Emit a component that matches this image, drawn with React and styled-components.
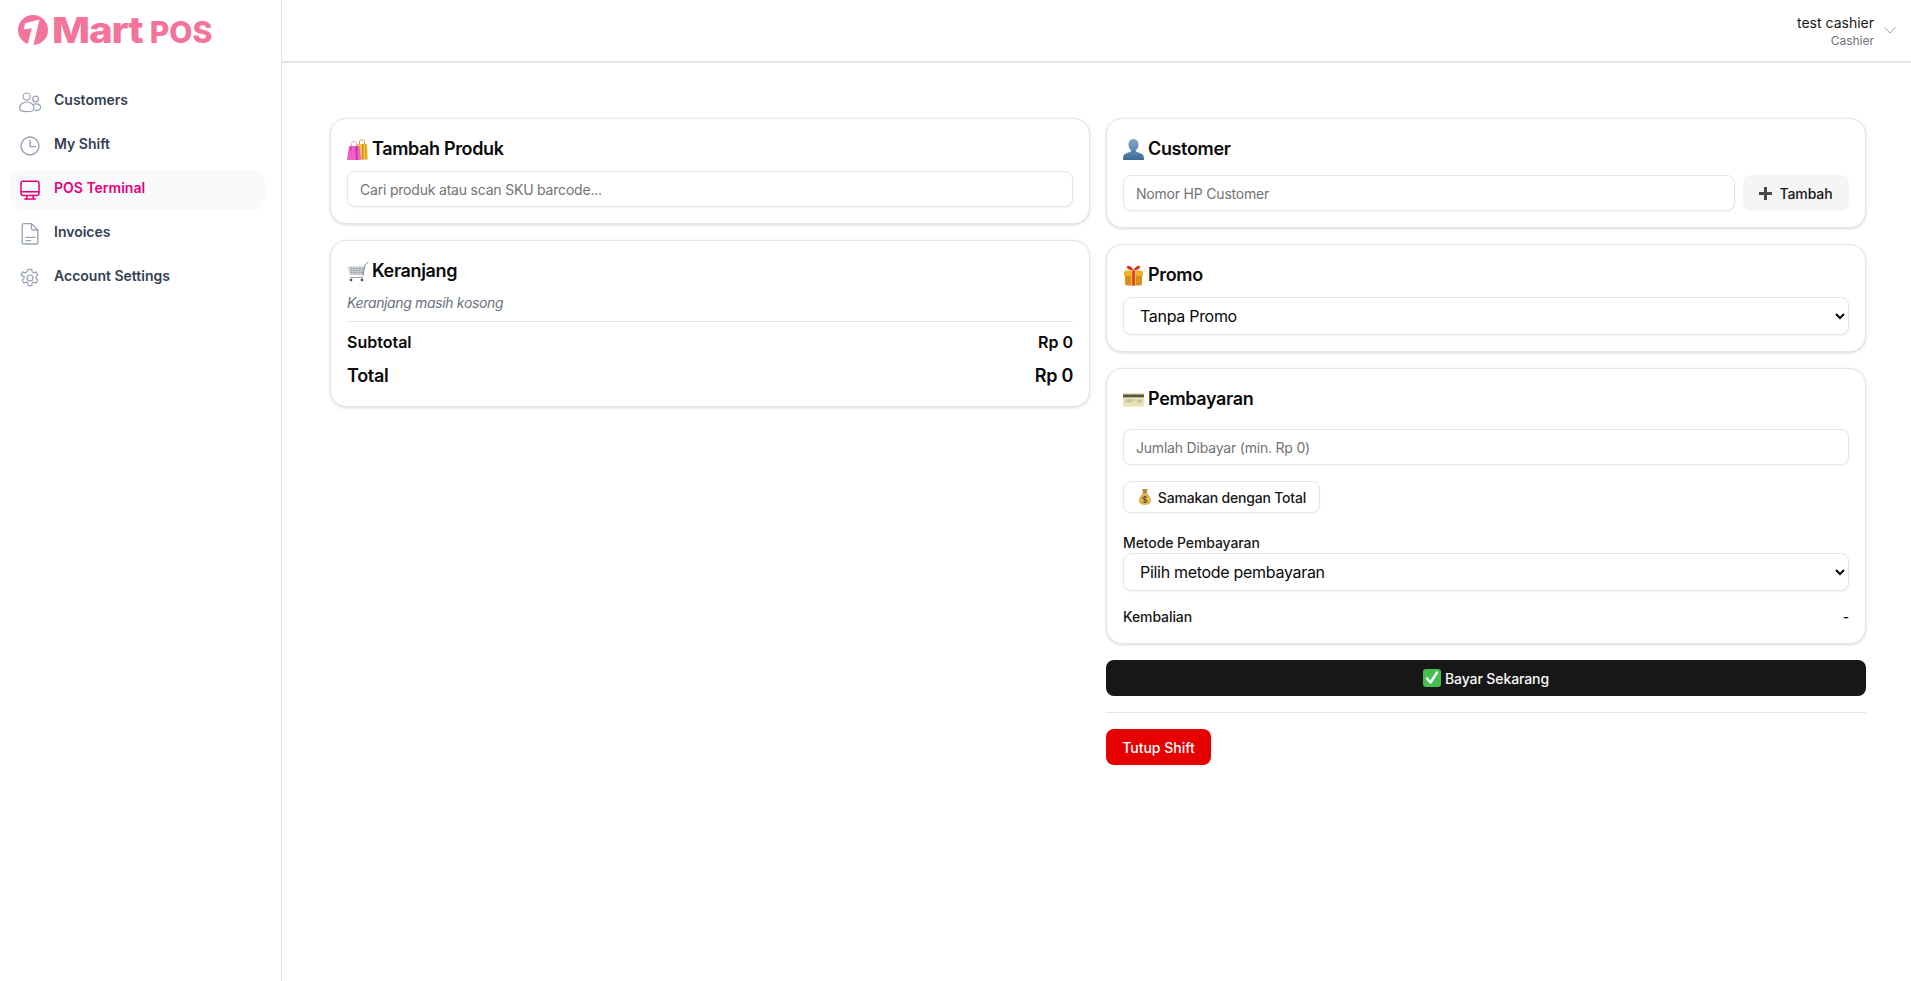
import React from 'react';
import styled, { createGlobalStyle } from 'styled-components';

const GlobalStyle = createGlobalStyle`
  html, body { margin: 0; padding: 0; background: #fff; }
  body { font-family: Inter, "Noto Sans", sans-serif; color: #0a0a0a; }
  * { box-sizing: border-box; }
`;

/* nav icons */
const UsersIcon = () => (
  <svg width="24" height="24" viewBox="0 0 24 24" fill="none" stroke="currentColor" strokeWidth="1.2">
    <circle cx="8.6" cy="6.6" r="3.6" />
    <circle cx="17.6" cy="9" r="2.9" />
    <path d="M1.6 18.4c0-3.9 3.2-6.4 7.2-6.4s7.2 2.5 7.2 6.4c0 2-3.2 3.2-7.2 3.2s-7.2-1.2-7.2-3.2z" />
    <path d="M15.2 14.4c.7-.4 1.6-.6 2.5-.6 2.6 0 4.9 1.4 4.9 3.8 0 2-2.2 3-5.8 3" />
  </svg>
);

const ClockIcon = () => (
  <svg width="24" height="24" viewBox="0 0 24 24" fill="none" stroke="currentColor" strokeWidth="1.4" strokeLinecap="round" strokeLinejoin="round">
    <circle cx="12" cy="12" r="9" />
    <path d="M12 6.4V12.6H17.6" />
  </svg>
);

const MonitorIcon = () => (
  <svg width="24" height="24" viewBox="0 0 24 24" fill="none" stroke="currentColor" strokeWidth="1.5" strokeLinecap="round" strokeLinejoin="round">
    <rect x="3" y="3.2" width="18" height="14.2" rx="2.2" />
    <path d="M3 13.8H21M9 17.4L8.6 20.8M15 17.4L15.4 20.8M6.8 20.9H17.2" />
  </svg>
);

const FileIcon = () => (
  <svg width="24" height="24" viewBox="0 0 24 24" fill="none" stroke="currentColor" strokeWidth="1.3" strokeLinecap="round" strokeLinejoin="round">
    <path d="M13.4 1.6H6a1.8 1.8 0 0 0-1.8 1.8v16.8A1.8 1.8 0 0 0 6 22h12a1.8 1.8 0 0 0 1.8-1.8V8z" />
    <path d="M13.4 1.6v4.6A1.8 1.8 0 0 0 15.2 8h4.6" />
    <path d="M8 15.3h9M8 18.7h4.7" />
  </svg>
);

const GearIcon = () => (
  <svg width="24" height="24" viewBox="0 0 24 24" fill="none" stroke="currentColor" strokeWidth="1.4" strokeLinecap="round" strokeLinejoin="round">
    <g transform="translate(1.44 1.44) scale(.88)">
      <circle cx="12" cy="12" r="3.4" />
      <path d="M10 2.2h4l.5 2.9 1.7 1 2.7-1 2 3.4-2.2 1.9v2l2.2 1.9-2 3.4-2.7-1-1.7 1-.5 2.9h-4l-.5-2.9-1.7-1-2.7 1-2-3.4 2.2-1.9v-2L1.8 8.5l2-3.4 2.7 1 1.7-1z" />
    </g>
  </svg>
);

/* colour emoji drawn by hand, the system ones look too different */
const BagsEmoji = () => (
  <svg width="21" height="21" viewBox="0 0 21 21" role="img" aria-label="🛍️">
    <path d="M12.5 5.5V3c0-3 5-3 5 0v3" fill="none" stroke="#d9a520" strokeWidth="1" />
    <path d="M10 5h10l1 15.5H10z" fill="#f3c53a" />
    <path d="M15 5h1.6v15.5H15zM18.2 5h1v15.5h-1z" fill="#c9952a" />
    <path d="M4.5 7.5V4.5c0-3 5-3 5 0v3" fill="none" stroke="#e9a0c8" strokeWidth="1" />
    <path d="M2 7h10.5l1.5 14H0z" fill="#f25ec6" />
    <path d="M8.4 7h1.4l.8 14H9z" fill="#b83a90" />
    <path d="M3.6 8.2h.8v3h-.8zM9.6 8.2h.8v3h-.8z" fill="#7d2a63" />
  </svg>
);

const CartEmoji = () => (
  <svg width="21" height="21" viewBox="0 0 21 21" role="img" aria-label="🛒">
    <path d="M0.4 5.5H17.4L15.8 14H3z" fill="#d3d6da" />
    <path d="M3 7.5H17M3 9.5H16.6M3 11.5H16.2M4 5.5L5 14M7 5.5L7.6 14M10 5.5V14M13 5.5L12.6 14M16 5.5L15 14" stroke="#8e959c" strokeWidth="0.5" fill="none" />
    <path d="M16 14.5L18 4L20.6 1.5" stroke="#868c93" strokeWidth="1" fill="none" strokeLinecap="round" />
    <path d="M3.5 16.4H16" stroke="#9aa0a6" strokeWidth="1" />
    <circle cx="4" cy="19" r="1.4" fill="#55595e" />
    <circle cx="15" cy="19" r="1.4" fill="#55595e" />
  </svg>
);

const UserEmoji = () => (
  <svg width="21" height="21" viewBox="0 0 21 21" role="img" aria-label="👤">
    <defs>
      <linearGradient id="userBlue" x1="0" y1="0" x2="0" y2="1">
        <stop offset="0" stopColor="#86a9c9" />
        <stop offset="1" stopColor="#3a6a98" />
      </linearGradient>
    </defs>
    <path
      d="M10.5 0c3.2 0 5 2.4 5 5.4 0 2.2-1 4.4-2.3 5.5-.5.4-.4 1.6.3 1.9 2.8 1.2 6.6 2 7.1 4.4.2 1 .4 2.1.4 3.8H0c0-1.7.2-2.8.4-3.8.5-2.4 4.3-3.2 7.1-4.4.7-.3.8-1.5.3-1.9C6.500 9.800 5.500 7.600 5.500 5.400 5.500 2.400 7.300 0 10.500 0z"
      fill="url(#userBlue)"
    />
  </svg>
);

const GiftEmoji = () => (
  <svg width="21" height="21" viewBox="0 0 21 21" role="img" aria-label="🎁">
    <path d="M10.500 5C8 1 5 0 4 1.500S6 5 10.500 5.500C15 5 18 3 17 1.500S13 1 10.500 5z" fill="#d8322f" />
    <path d="M1 7.500A2 2 0 0 1 3 5.500h15a2 2 0 0 1 2 2v3.500H1z" fill="#efb02c" />
    <path d="M2 11h17v7.500a2 2 0 0 1-2 2H4a2 2 0 0 1-2-2z" fill="#d98f1f" />
    <path d="M8 5.500h5V20.500H8z" fill="#f4c93e" />
    <path d="M9.200 5.500h2.600V20.500H9.200z" fill="#e3352f" />
  </svg>
);

const CardEmoji = () => (
  <svg width="21" height="21" viewBox="0 0 21 21" role="img" aria-label="💳">
    <rect x="0" y="4" width="21" height="13.500" rx="0.800" fill="#e9e3b4" />
    <rect x="0" y="5.500" width="21" height="2.800" fill="#57553f" />
    <path d="M2.500 11h9M2.500 12.800h6" stroke="#a9aa9a" strokeWidth="0.900" />
    <rect x="14" y="10.500" width="5" height="3" fill="#c9c297" />
  </svg>
);

const MoneyEmoji = () => (
  <svg width="17" height="18" viewBox="0 0 17 18" role="img" aria-label="💰">
    <path d="M5.500 0.500h6L10.300 4H6.700z" fill="#b98a3a" />
    <rect x="6" y="3.800" width="5" height="1.300" rx="0.500" fill="#7a5523" />
    <path d="M6.500 5C3.500 7.500 2 10.500 2 13c0 3 2.500 4.500 6.500 4.500S15 16 15 13c0-2.500-1.500-5.500-4.500-8z" fill="#e2b54f" />
    <path d="M8.500 7.800v7.400M10.600 9.400c-.5-.6-1.300-.8-2.100-.8-1.300 0-2.200.6-2.200 1.600 0 2.200 4.400 1.100 4.400 3.200 0 1-.9 1.600-2.200 1.600-1 0-1.800-.3-2.300-.9" fill="none" stroke="#3f3320" strokeWidth="0.900" />
  </svg>
);

const CheckEmoji = () => (
  <svg width="18" height="18" viewBox="0 0 18 18" role="img" aria-label="✅">
    <rect width="18" height="18" rx="3" fill="#43c04d" />
    <path d="M4 9.500L7.500 13.500L14 3.500" fill="none" stroke="#fff" strokeWidth="2.400" strokeLinecap="round" strokeLinejoin="round" />
  </svg>
);

const PlusIcon = () => (
  <svg width="13" height="13" viewBox="0 0 13 13" fill="#4a4a4a">
    <path d="M5 0h3v5h5v3H8v5H5V8H0V5h5z" />
  </svg>
);

const navItems = [
  { label: 'Customers', Icon: UsersIcon },
  { label: 'My Shift', Icon: ClockIcon },
  { label: 'POS Terminal', Icon: MonitorIcon, active: true },
  { label: 'Invoices', Icon: FileIcon },
  { label: 'Account Settings', Icon: GearIcon },
];

const App = () => {
  return (
    <Page>
      <GlobalStyle />
      <Sidebar>
        <Logo>
          <svg width="30" height="30" viewBox="0 0 30 30">
            <circle cx="15" cy="15" r="15" fill="#f4739a" />
            <path d="M7 8.200L21.500 4.500L15.500 30H9.500L13.800 13.200L5.600 14.500z" fill="#fff" />
          </svg>
          <LogoMart>Mart</LogoMart>
          <LogoPos>POS</LogoPos>
        </Logo>
        <Nav>
          {navItems.map(({ label, Icon, active }) => (
            <NavItem key={label} $active={active}>
              <Icon />
              <NavLabel>{label}</NavLabel>
            </NavItem>
          ))}
        </Nav>
      </Sidebar>

      <Main>
        <Header>
          <UserBox>
            <UserName>test cashier</UserName>
            <UserRole>Cashier</UserRole>
          </UserBox>
          <svg width="12" height="7" viewBox="0 0 12 7" fill="none" stroke="#9ca3af" strokeWidth="1">
            <path d="M0.5 0.5L6 6L11.5 0.5" />
          </svg>
        </Header>

        <Content>
          <Column>
            <Card>
              <CardTitle><BagsEmoji />Tambah Produk</CardTitle>
              <TextInput placeholder="Cari produk atau scan SKU barcode..." />
            </Card>
            <Card>
              <CardTitle><CartEmoji />Keranjang</CardTitle>
              <EmptyText>Keranjang masih kosong</EmptyText>
              <Divider />
              <SummaryRow>
                <span>Subtotal</span>
                <span>Rp 0</span>
              </SummaryRow>
              <SummaryRow $large>
                <span>Total</span>
                <span>Rp 0</span>
              </SummaryRow>
            </Card>
          </Column>

          <Column>
            <Card>
              <CardTitle><UserEmoji />Customer</CardTitle>
              <CustomerRow>
                <TextInput placeholder="Nomor HP Customer" />
                <AddButton><PlusIcon />Tambah</AddButton>
              </CustomerRow>
            </Card>
            <Card>
              <CardTitle><GiftEmoji />Promo</CardTitle>
              <Select defaultValue="none">
                <option value="none">Tanpa Promo</option>
              </Select>
            </Card>
            <Card>
              <PaymentTitle><CardEmoji />Pembayaran</PaymentTitle>
              <TextInput placeholder="Jumlah Dibayar (min. Rp 0)" />
              <OutlineButton><MoneyEmoji />Samakan dengan Total</OutlineButton>
              <FieldLabel>Metode Pembayaran</FieldLabel>
              <Select defaultValue="">
                <option value="">Pilih metode pembayaran</option>
              </Select>
              <ChangeRow>
                <span>Kembalian</span>
                <span>-</span>
              </ChangeRow>
            </Card>
            <PayButton><CheckEmoji />Bayar Sekarang</PayButton>
            <ThinLine />
            <div>
              <CloseShiftButton>Tutup Shift</CloseShiftButton>
            </div>
          </Column>
        </Content>
      </Main>
    </Page>
  );
};

export default App;

const Page = styled.div`
  display: flex;
  min-height: 981px;
`;

const Sidebar = styled.aside`
  width: 282px;
  flex-shrink: 0;
  border-right: 1px solid #e5e7eb;
  padding: 0 16px 0 10px;
`;

const Logo = styled.div`
  display: flex;
  align-items: center;
  height: 60px;
  padding-left: 8px;
  color: #f4739a;
  font-family: Inter, sans-serif;
`;

const LogoMart = styled.span`
  display: inline-block;
  margin-left: 4px;
  margin-right: 10px;
  font-size: 36px;
  font-weight: 800;
  letter-spacing: -1px;
  transform: scaleX(1.12);
  transform-origin: left center;
`;

const LogoPos = styled.span`
  margin-left: 7px;
  padding-top: 4px;
  font-size: 30px;
  font-weight: 800;
`;

const Nav = styled.nav`
  display: flex;
  flex-direction: column;
  gap: 4px;
  margin-top: 22px;
`;

const NavItem = styled.div`
  display: flex;
  align-items: center;
  gap: 12px;
  height: 40px;
  padding: 0 8px;
  border-radius: 12px;
  font-size: 14px;
  font-weight: 600;
  color: ${(p) => (p.$active ? '#e6007e' : '#344054')};
  background: ${(p) => (p.$active ? '#f9fafb' : 'transparent')};

  svg {
    color: ${(p) => (p.$active ? '#e6007e' : '#98a2b3')};
    flex-shrink: 0;
  }
`;

const NavLabel = styled.span`
  margin-bottom: 6px;
`;

const Main = styled.main`
  flex: 1;
  min-width: 0;
`;

const Header = styled.header`
  display: flex;
  justify-content: flex-end;
  align-items: center;
  gap: 10px;
  height: 63px;
  padding-right: 15px;
  border-bottom: 2px solid #e5e5e5;
`;

const UserBox = styled.div`
  display: flex;
  flex-direction: column;
  align-items: flex-end;
`;

const UserName = styled.span`
  font-size: 14px;
  line-height: 20px;
  color: #171717;
`;

const UserRole = styled.span`
  font-size: 12px;
  line-height: 16px;
  color: #6b7280;
`;

const Content = styled.div`
  display: grid;
  grid-template-columns: 1fr 1fr;
  gap: 16px;
  padding: 55px 45px 0 48px;
  align-items: start;
`;

const Column = styled.div`
  display: flex;
  flex-direction: column;
  gap: 16px;
`;

const Card = styled.section`
  display: flex;
  flex-direction: column;
  align-items: stretch;
  padding: 16px;
  background: #fff;
  border: 1px solid #e5e5e5;
  border-radius: 16px;
  box-shadow: 0 1px 3px rgba(0, 0, 0, 0.15);
`;

const CardTitle = styled.h2`
  display: flex;
  align-items: center;
  gap: 4px;
  margin: 0 0 8px;
  font-size: 18px;
  line-height: 28px;
  font-weight: 600;
  letter-spacing: -0.35px;
  color: #0a0a0a;
`;

const PaymentTitle = styled(CardTitle)`
  margin-bottom: 16px;
`;

const TextInput = styled.input`
  width: 100%;
  height: 36px;
  padding: 0 12px;
  font-family: inherit;
  font-size: 14px;
  letter-spacing: -0.2px;
  color: #0a0a0a;
  background: #fff;
  border: 1px solid #e5e5e5;
  border-radius: 8px;
  box-shadow: 0 1px 2px rgba(0, 0, 0, 0.05);
  outline: none;

  &::placeholder {
    color: #737373;
  }
`;

const EmptyText = styled.p`
  margin: 0;
  font-size: 14px;
  line-height: 20px;
  font-style: italic;
  letter-spacing: -0.35px;
  color: #6b7280;
`;

const Divider = styled.hr`
  width: 100%;
  margin: 8px 0;
  border: 0;
  border-top: 1px solid #e5e5e5;
`;

const SummaryRow = styled.div`
  display: flex;
  justify-content: space-between;
  font-weight: 600;
  font-size: ${(p) => (p.$large ? '18px' : '16px')};
  line-height: ${(p) => (p.$large ? '28px' : '24px')};
  letter-spacing: ${(p) => (p.$large ? '-0.3px' : '0')};
  margin-top: ${(p) => (p.$large ? '8px' : '0')};
`;

const CustomerRow = styled.div`
  display: flex;
  align-items: flex-start;
  gap: 8px;
  margin-top: 4px;
`;

const AddButton = styled.button`
  display: flex;
  align-items: center;
  justify-content: center;
  gap: 7px;
  flex-shrink: 0;
  width: 106px;
  height: 36px;
  font-family: inherit;
  font-size: 14px;
  font-weight: 500;
  letter-spacing: -0.1px;
  color: #171717;
  background: #f5f5f5;
  border: 0;
  border-radius: 8px;
`;

const Select = styled.select`
  width: 100%;
  height: 38px;
  padding: 0 12px;
  font-family: inherit;
  font-size: 16px;
  letter-spacing: -0.3px;
  color: #0a0a0a;
  background: #fff;
  border: 1px solid #e5e5e5;
  border-radius: 8px;
  box-shadow: 0 1px 2px rgba(0, 0, 0, 0.05);
`;

const OutlineButton = styled.button`
  display: flex;
  align-items: center;
  gap: 5px;
  align-self: flex-start;
  width: 197px;
  height: 32px;
  margin-top: 16px;
  padding: 0 13px;
  font-family: inherit;
  font-size: 14px;
  font-weight: 500;
  letter-spacing: -0.2px;
  white-space: nowrap;
  color: #171717;
  background: #fff;
  border: 1px solid #e5e5e5;
  border-radius: 8px;
  box-shadow: 0 1px 2px rgba(0, 0, 0, 0.05);
`;

const FieldLabel = styled.label`
  margin-top: 20px;
  font-size: 14px;
  line-height: 20px;
  font-weight: 500;
  letter-spacing: -0.1px;
  color: #171717;
`;

const ChangeRow = styled.div`
  display: flex;
  justify-content: space-between;
  margin-top: 16px;
  font-size: 14px;
  line-height: 20px;
  font-weight: 500;
  letter-spacing: -0.1px;
  color: #171717;
`;

const PayButton = styled.button`
  display: flex;
  align-items: center;
  justify-content: center;
  gap: 4px;
  width: 100%;
  height: 36px;
  font-family: inherit;
  font-size: 14px;
  font-weight: 500;
  letter-spacing: -0.1px;
  color: #fafafa;
  background: #171717;
  border: 0;
  border-radius: 8px;
`;

const ThinLine = styled.hr`
  width: 100%;
  margin: 0;
  border: 0;
  border-top: 1px solid #e5e5e5;
`;

const CloseShiftButton = styled.button`
  width: 105px;
  height: 36px;
  font-family: inherit;
  font-size: 14px;
  font-weight: 500;
  color: #fff;
  background: #e60000;
  border: 0;
  border-radius: 8px;
`;
